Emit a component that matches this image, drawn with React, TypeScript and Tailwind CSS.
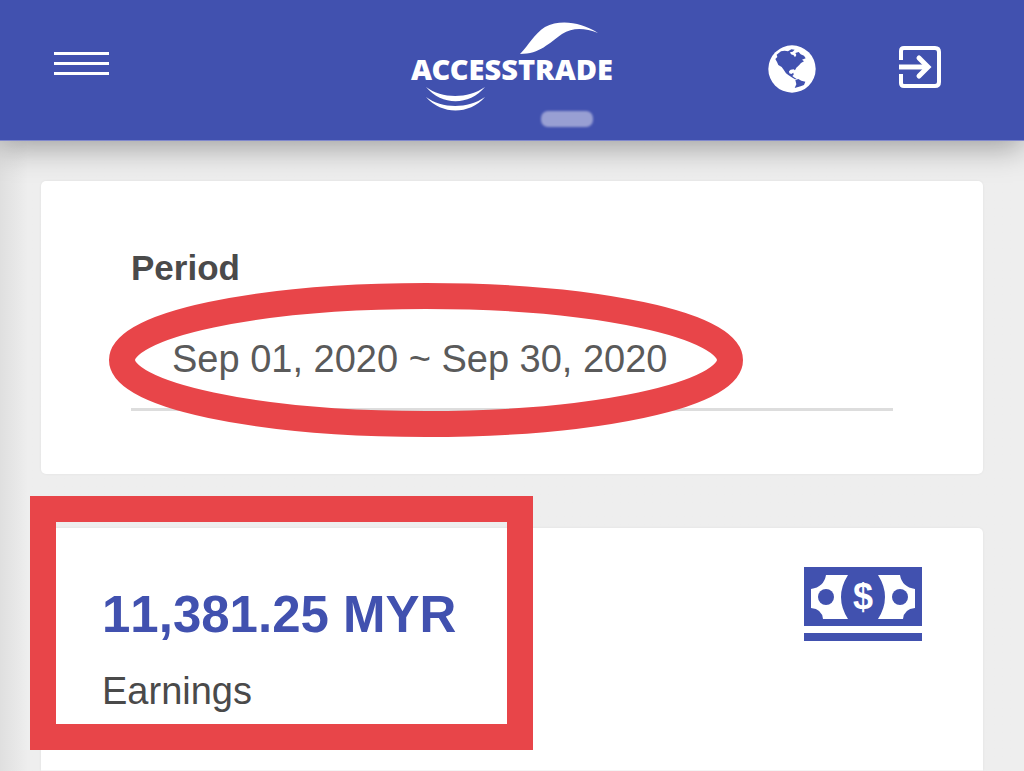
import React from "react";

export default function App() {
  return (
    <div className="min-h-screen overflow-hidden bg-[#eeeeee] bg-linear-to-r from-[#dfdfdf] to-[#eeeeee] to-[28px] font-['Liberation_Sans',sans-serif] text-[#4a4a4a]">
      <Header />
      <main className="grid gap-[54px] px-[41px] pt-10">
        <PeriodCard />
        <EarningsCard />
      </main>
    </div>
  );
}

function Header() {
  return (
    <header className="relative flex h-[141px] items-start justify-between border-b border-[#8088cc] bg-[#4151af] pr-[83px] pl-[54px] shadow-[0_6px_30px_rgba(0,0,0,0.35)]">
      <button aria-label="Menu" className="mt-[52px] grid gap-[7px]">
        <span className="h-[3px] w-[55px] bg-white" />
        <span className="h-[3px] w-[55px] bg-white" />
        <span className="h-[3px] w-[55px] bg-white" />
      </button>
      <Logo />
      <div className="mt-[45px] flex items-start gap-[83px]">
        <button aria-label="Language">
          <GlobeIcon />
        </button>
        <button aria-label="Log out">
          <ExitIcon />
        </button>
      </div>
    </header>
  );
}

function Logo() {
  return (
    <svg
      className="ml-[146px] h-[136px] w-[210px]"
      viewBox="0 0 210 136"
      role="img"
      aria-label="ACCESSTRADE"
    >
      <defs>
        <filter id="soft">
          <feGaussianBlur stdDeviation="1" />
        </filter>
      </defs>
      <path
        d="M113 54C122 45 127 34 138 27C153 19 174 22 191 33C178 28 166 27 155 34C142 43 133 54 113 54Z"
        fill="white"
      />
      <text
        x="4"
        y="80"
        fill="white"
        fontSize="29"
        fontWeight="900"
        fontFamily="Noto Sans, sans-serif"
      >
        ACCESSTRADE
      </text>
      <path d="M19 87C35 99 61 99 78 87C62 106 35 106 19 87Z" fill="white" />
      <path d="M19 97C35 109 61 109 78 97C62 115 35 115 19 97Z" fill="white" />
      <rect
        x="134"
        y="111"
        width="52"
        height="16"
        rx="7"
        fill="#989fd3"
        filter="url(#soft)"
      />
    </svg>
  );
}

function GlobeIcon() {
  return (
    <svg className="h-12 w-12" viewBox="10 10 144 144">
      <circle cx="82" cy="82" r="71" fill="white" />
      <path
        d="M37 61L32 52L38 46L36 39L49 29L60 27L70 29L80 23L90 24L84 30L76 32L79 38L87 41L91 47L95 40L92 34L102 31L108 38L118 42L123 50L112 54L118 59L109 64L103 71L95 78L91 86L87 83L78 84L73 89L74 95L80 97L86 93L87 99L83 103L90 108L96 112L91 113L81 107L72 101L64 95L57 84L51 76L41 70Z"
        fill="#4151af"
      />
      <path d="M92 115L101 112L110 117L122 120L118 130L108 134L90 139L95 128Z" fill="#4151af" />
    </svg>
  );
}

function ExitIcon() {
  return (
    <svg
      className="h-[44px] w-[42px]"
      viewBox="0 0 42 44"
      fill="none"
      stroke="white"
      strokeWidth="4"
    >
      <path d="M2 15V6Q2 3 5 3H36Q40 3 40 7V37Q40 41 36 41H5Q2 41 2 38V29" />
      <path d="M0 22H28" strokeWidth="5" />
      <path d="M20 13L29 22L20 31" strokeLinecap="round" strokeWidth="5" />
    </svg>
  );
}

function PeriodCard() {
  return (
    <section className="relative h-[293px] rounded-[5px] bg-white px-[90px] pt-[67px] shadow-[0_0_3px_rgba(0,0,0,0.06)]">
      <label htmlFor="period" className="block text-[35px] leading-10 font-bold">
        Period
      </label>
      <input
        id="period"
        readOnly
        defaultValue="Sep 01, 2020 ~ Sep 30, 2020"
        className="mt-[22px] h-[101px] w-full border-b-3 border-[#dddddd] px-[41px] text-[38px] text-[#5a5a5a] outline-none"
      />
      <svg
        className="pointer-events-none absolute top-[101px] left-[67px] h-[156px] w-[636px]"
        viewBox="0 0 636 156"
      >
        <ellipse
          cx="318"
          cy="78"
          rx="304"
          ry="64"
          fill="none"
          stroke="#e84549"
          strokeWidth="26"
        />
      </svg>
    </section>
  );
}

function EarningsCard() {
  return (
    <section className="relative flex items-start justify-between rounded-t-[5px] border-b border-[#f4f4f4] bg-white px-[61px] pt-[39px] pb-[54px] shadow-[0_0_3px_rgba(0,0,0,0.06)]">
      <div className="pt-5">
        <p className="text-[51px] leading-[56px] font-bold text-[#4151af] [font-kerning:none]">
          11,381.25 MYR
        </p>
        <p className="mt-[23px] text-[38px] leading-[50px]">Earnings</p>
      </div>
      <MoneyIcon />
      <div className="pointer-events-none absolute -top-8 -left-[11px] h-[254px] w-[503px] border-[26px] border-[#e84549]" />
    </section>
  );
}

function MoneyIcon() {
  return (
    <svg className="h-[74px] w-[118px]" viewBox="0 0 118 74">
      <path d="M0 0H118V59H0ZM0 66H118V74H0Z" fill="#4151af" />
      <path
        d="M22 8H44Q30 30 44 52H19Q18 42 7 41V22Q20 20 22 8ZM74 8H96Q98 20 111 22V41Q100 42 99 52H74Q88 30 74 8Z"
        fill="white"
      />
      <circle cx="22" cy="30" r="8" fill="#4151af" />
      <circle cx="96" cy="30" r="8" fill="#4151af" />
      <text
        x="59"
        y="42"
        textAnchor="middle"
        fill="white"
        fontSize="36"
        fontWeight="700"
        fontFamily="Liberation Sans, sans-serif"
      >
        $
      </text>
    </svg>
  );
}
